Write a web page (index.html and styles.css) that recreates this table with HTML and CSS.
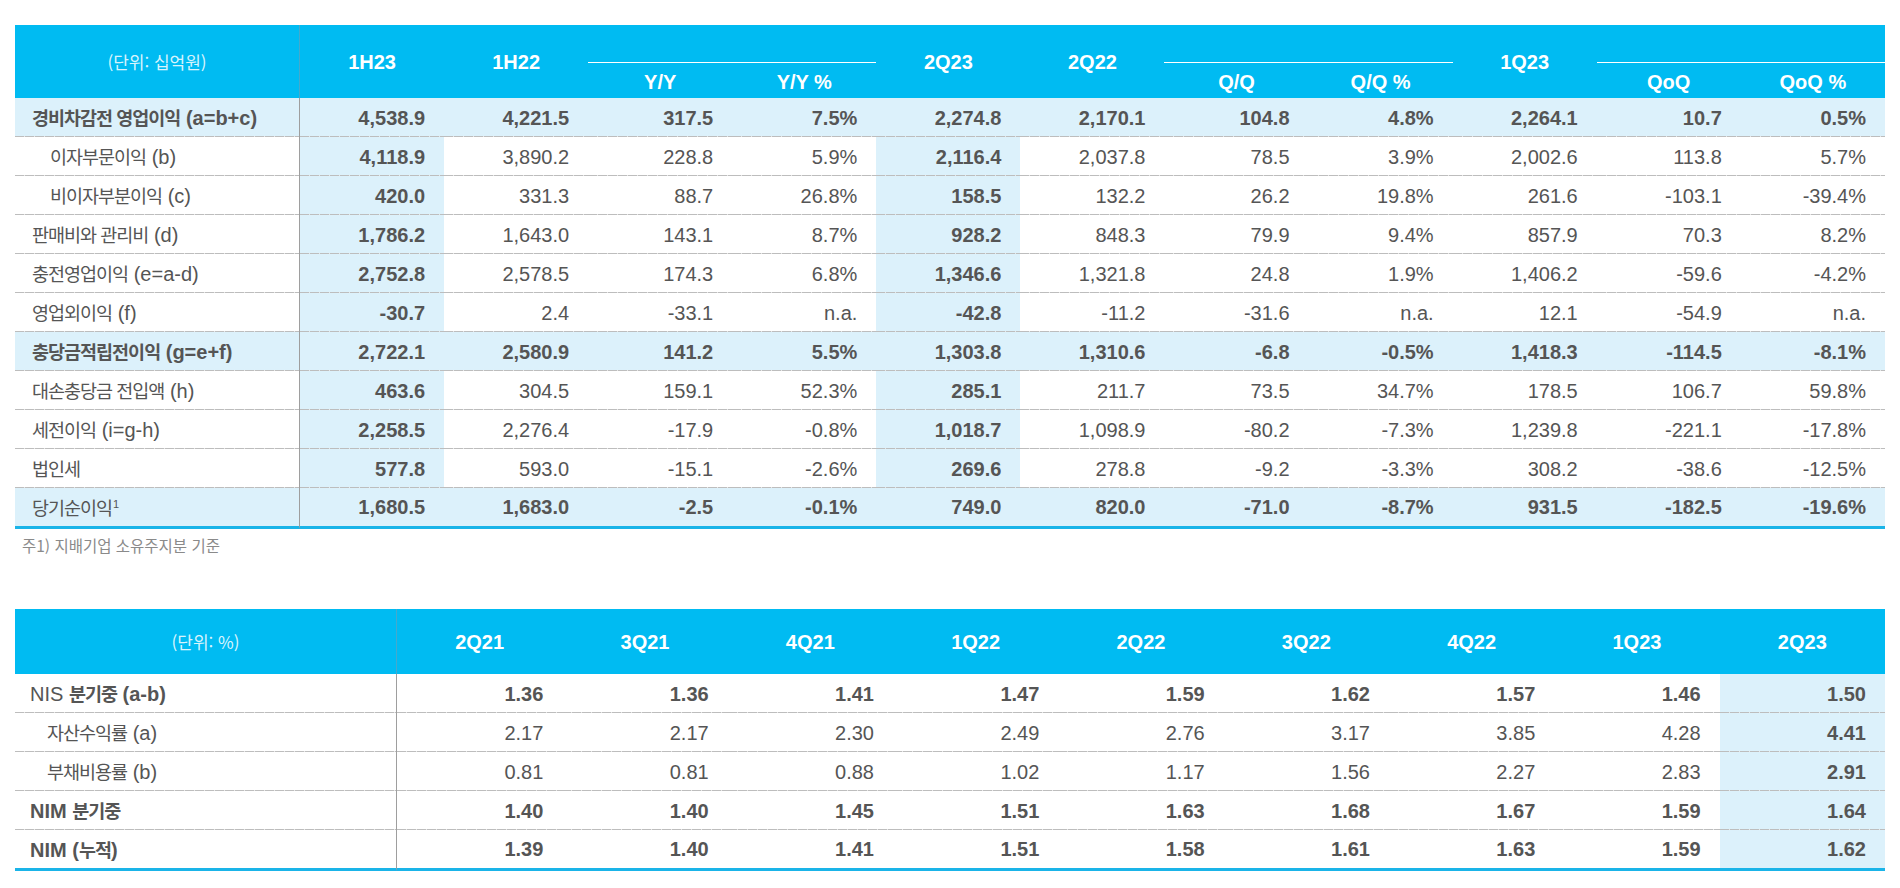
FILE: index.html
```html
<!DOCTYPE html>
<html lang="ko">
<head>
<meta charset="utf-8">
<title>실적 요약</title>
<link rel="stylesheet" href="styles.css">
</head>
<body>
<main class="page">
  <table class="fin">
    <colgroup><col class="c-label"><col span="11"></colgroup>
    <thead>
      <tr class="h1">
        <th rowspan="2" class="lbl unit">(단위: 십억원)</th>
        <th rowspan="2">1H23</th>
        <th rowspan="2">1H22</th>
        <th colspan="2" class="grp"></th>
        <th rowspan="2">2Q23</th>
        <th rowspan="2">2Q22</th>
        <th colspan="2" class="grp"></th>
        <th rowspan="2">1Q23</th>
        <th colspan="2" class="grp"></th>
      </tr>
      <tr class="h2">
        <th>Y/Y</th><th>Y/Y %</th><th>Q/Q</th><th>Q/Q %</th><th>QoQ</th><th>QoQ %</th>
      </tr>
    </thead>
    <tbody>
      <tr class="hl">
        <td class="lbl b"><span class="ko">경비차감전 영업이익</span> (a=b+c)</td>
        <td>4,538.9</td><td>4,221.5</td><td>317.5</td><td>7.5%</td><td>2,274.8</td><td>2,170.1</td><td>104.8</td><td>4.8%</td><td>2,264.1</td><td>10.7</td><td>0.5%</td>
      </tr>
      <tr>
        <td class="lbl ind"><span class="ko">이자부문이익</span> (b)</td>
        <td>4,118.9</td><td>3,890.2</td><td>228.8</td><td>5.9%</td><td>2,116.4</td><td>2,037.8</td><td>78.5</td><td>3.9%</td><td>2,002.6</td><td>113.8</td><td>5.7%</td>
      </tr>
      <tr>
        <td class="lbl ind"><span class="ko">비이자부분이익</span> (c)</td>
        <td>420.0</td><td>331.3</td><td>88.7</td><td>26.8%</td><td>158.5</td><td>132.2</td><td>26.2</td><td>19.8%</td><td>261.6</td><td>-103.1</td><td>-39.4%</td>
      </tr>
      <tr>
        <td class="lbl"><span class="ko">판매비와 관리비</span> (d)</td>
        <td>1,786.2</td><td>1,643.0</td><td>143.1</td><td>8.7%</td><td>928.2</td><td>848.3</td><td>79.9</td><td>9.4%</td><td>857.9</td><td>70.3</td><td>8.2%</td>
      </tr>
      <tr>
        <td class="lbl"><span class="ko">충전영업이익</span> (e=a-d)</td>
        <td>2,752.8</td><td>2,578.5</td><td>174.3</td><td>6.8%</td><td>1,346.6</td><td>1,321.8</td><td>24.8</td><td>1.9%</td><td>1,406.2</td><td>-59.6</td><td>-4.2%</td>
      </tr>
      <tr>
        <td class="lbl"><span class="ko">영업외이익</span> (f)</td>
        <td>-30.7</td><td>2.4</td><td>-33.1</td><td>n.a.</td><td>-42.8</td><td>-11.2</td><td>-31.6</td><td>n.a.</td><td>12.1</td><td>-54.9</td><td>n.a.</td>
      </tr>
      <tr class="hl">
        <td class="lbl b"><span class="ko">충당금적립전이익</span> (g=e+f)</td>
        <td>2,722.1</td><td>2,580.9</td><td>141.2</td><td>5.5%</td><td>1,303.8</td><td>1,310.6</td><td>-6.8</td><td>-0.5%</td><td>1,418.3</td><td>-114.5</td><td>-8.1%</td>
      </tr>
      <tr>
        <td class="lbl"><span class="ko">대손충당금 전입액</span> (h)</td>
        <td>463.6</td><td>304.5</td><td>159.1</td><td>52.3%</td><td>285.1</td><td>211.7</td><td>73.5</td><td>34.7%</td><td>178.5</td><td>106.7</td><td>59.8%</td>
      </tr>
      <tr>
        <td class="lbl"><span class="ko">세전이익</span> (i=g-h)</td>
        <td>2,258.5</td><td>2,276.4</td><td>-17.9</td><td>-0.8%</td><td>1,018.7</td><td>1,098.9</td><td>-80.2</td><td>-7.3%</td><td>1,239.8</td><td>-221.1</td><td>-17.8%</td>
      </tr>
      <tr>
        <td class="lbl"><span class="ko">법인세</span></td>
        <td>577.8</td><td>593.0</td><td>-15.1</td><td>-2.6%</td><td>269.6</td><td>278.8</td><td>-9.2</td><td>-3.3%</td><td>308.2</td><td>-38.6</td><td>-12.5%</td>
      </tr>
      <tr class="hl last">
        <td class="lbl"><span class="ko">당기순이익</span><sup class="fn">1</sup></td>
        <td>1,680.5</td><td>1,683.0</td><td>-2.5</td><td>-0.1%</td><td>749.0</td><td>820.0</td><td>-71.0</td><td>-8.7%</td><td>931.5</td><td>-182.5</td><td>-19.6%</td>
      </tr>
    </tbody>
  </table>

  <p class="note">주1) 지배기업 소유주지분 기준</p>

  <table class="nim">
    <colgroup><col class="c-label"><col span="9"></colgroup>
    <thead>
      <tr>
        <th class="lbl unit">(단위: %)</th>
        <th>2Q21</th><th>3Q21</th><th>4Q21</th><th>1Q22</th><th>2Q22</th><th>3Q22</th><th>4Q22</th><th>1Q23</th><th>2Q23</th>
      </tr>
    </thead>
    <tbody>
      <tr class="bold">
        <td class="lbl"><span class="thin">NIS</span> <span class="ko">분기중</span> (a-b)</td>
        <td>1.36</td><td>1.36</td><td>1.41</td><td>1.47</td><td>1.59</td><td>1.62</td><td>1.57</td><td>1.46</td><td>1.50</td>
      </tr>
      <tr>
        <td class="lbl ind"><span class="ko">자산수익률</span> (a)</td>
        <td>2.17</td><td>2.17</td><td>2.30</td><td>2.49</td><td>2.76</td><td>3.17</td><td>3.85</td><td>4.28</td><td>4.41</td>
      </tr>
      <tr>
        <td class="lbl ind"><span class="ko">부채비용률</span> (b)</td>
        <td>0.81</td><td>0.81</td><td>0.88</td><td>1.02</td><td>1.17</td><td>1.56</td><td>2.27</td><td>2.83</td><td>2.91</td>
      </tr>
      <tr class="bold">
        <td class="lbl">NIM <span class="ko">분기중</span></td>
        <td>1.40</td><td>1.40</td><td>1.45</td><td>1.51</td><td>1.63</td><td>1.68</td><td>1.67</td><td>1.59</td><td>1.64</td>
      </tr>
      <tr class="bold last">
        <td class="lbl">NIM (<span class="ko">누적</span>)</td>
        <td>1.39</td><td>1.40</td><td>1.41</td><td>1.51</td><td>1.58</td><td>1.61</td><td>1.63</td><td>1.59</td><td>1.62</td>
      </tr>
    </tbody>
  </table>
</main>
</body>
</html>
```

FILE: styles.css
```css
* { box-sizing: border-box; }

body {
  margin: 0;
  background: #fff;
  color: #555;
  font-family: "Liberation Sans", Arial, "Noto Sans CJK KR", sans-serif;
}

.page {
  display: flex;
  flex-direction: column;
  align-items: flex-start;
  padding: 25px 15px 0;
}

table {
  width: 1870px;
  border-collapse: separate;
  border-spacing: 0;
  table-layout: fixed;
}

.fin col.c-label { width: 285px; }
.nim col.c-label { width: 382px; }

thead th {
  background: #00bbf2;
  color: #fff;
  font-size: 20px;
  font-weight: bold;
  line-height: 22px;
  text-align: center;
  vertical-align: middle;
  padding: 0;
  white-space: nowrap;
}

thead th.lbl { border-right: 1px solid #45a9cc; }

th.unit {
  font-family: "Noto Sans CJK KR", sans-serif;
  font-size: 17px;
  font-weight: normal;
  color: rgba(255, 255, 255, 0.86);
}

.fin .h1 th { height: 38px; }
.fin .h1 th.grp { border-bottom: 1px solid #fff; }
.fin .h2 th { height: 35px; padding-top: 3px; }

.nim thead th { height: 65px; }

tbody td {
  height: 39px;
  padding: 0 19px 0 0;
  font-size: 20px;
  line-height: 22px;
  text-align: right;
  vertical-align: middle;
  white-space: nowrap;
  background-color: #fff;
  background-image: repeating-linear-gradient(to right, #bdbdbd 0 9px, #e6e6e6 9px 10px);
  background-size: 100% 1px;
  background-position: left bottom;
  background-repeat: no-repeat;
}

tbody td.lbl {
  text-align: left;
  padding: 0 0 0 17px;
  border-right: 1px solid #9e9e9e;
}
.nim tbody td.lbl { padding-left: 15px; }
tbody td.ind { padding-left: 35px; }
.nim tbody td.ind { padding-left: 32px; }

.ko {
  font-family: "Noto Sans CJK KR", sans-serif;
  font-size: 18.5px;
  letter-spacing: -1px;
}

.b, .bold td { font-weight: bold; }
.thin { font-weight: normal; }

.fin tr.hl td { background-color: #dcf1fb; font-weight: bold; }
.fin tr.hl td.lbl { font-weight: normal; }
.fin tr.hl td.lbl.b { font-weight: bold; }

.fin tbody td:nth-child(2),
.fin tbody td:nth-child(6),
.nim tbody td:last-child {
  background-color: #dcf1fb;
  font-weight: bold;
}

tbody tr.last td {
  background-image: none;
  border-bottom: 3px solid #1ab4e8;
  height: 41px;
}

sup.fn {
  font-size: 11px;
  line-height: 0;
  vertical-align: 7px;
  margin-left: 1px;
}

.note {
  margin: 6px 0 0 7px;
  font-family: "Noto Sans CJK KR", sans-serif;
  font-size: 15.5px;
  line-height: 20px;
  color: #8a8a8a;
}

.nim { margin-top: 54px; }
```
